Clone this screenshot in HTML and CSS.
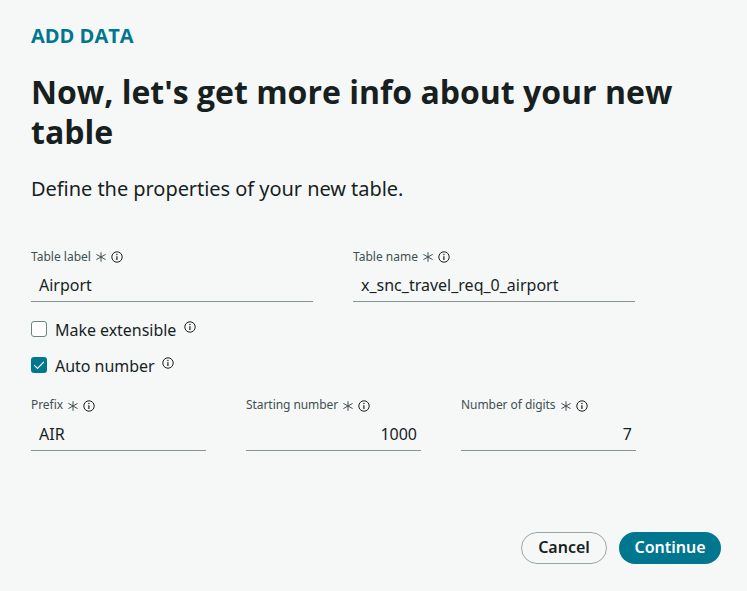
FILE: index.html
```html
<!DOCTYPE html>
<html lang="en">
<head>
<meta charset="utf-8">
<title>Add data</title>
<link rel="stylesheet" href="styles.css">
</head>
<body>
<svg class="defs" aria-hidden="true">
  <symbol id="req" viewBox="0 0 10 10"><path d="M5 .2V9.800M.4 2.400L9.600 7.600M9.600 2.400L.4 7.600" fill="none" stroke="currentColor"/></symbol>
  <symbol id="info" viewBox="0 0 12 12"><circle cx="6" cy="6" r="5.200" fill="none" stroke="currentColor"/><path d="M5.900 5.200V9" stroke="currentColor" stroke-width="1.200" fill="none"/><circle cx="5.900" cy="3.500" r=".7" fill="currentColor"/></symbol>
</svg>
<main class="page">
  <p class="eyebrow">ADD DATA</p>
  <h1>Now, let's get more info about your new table</h1>
  <p class="intro">Define the properties of your new table.</p>
  <form>
    <div class="row">
      <div class="field wide"><div class="label"><span>Table label</span><svg class="req"><use href="#req"/></svg><svg class="info"><use href="#info"/></svg></div><div class="value">Airport</div></div>
      <div class="field wide"><div class="label"><span>Table name</span><svg class="req"><use href="#req"/></svg><svg class="info"><use href="#info"/></svg></div><div class="value">x_snc_travel_req_0_airport</div></div>
    </div>
    <div class="check"><span class="box"></span><span>Make extensible</span><svg class="info"><use href="#info"/></svg></div>
    <div class="check"><span class="box on"><svg viewBox="0 0 16 16"><path d="M3.200 8.200L6.500 11.500L12.800 5" fill="none" stroke="currentColor" stroke-width="1.100"/></svg></span><span>Auto number</span><svg class="info"><use href="#info"/></svg></div>
    <div class="row second">
      <div class="field"><div class="label"><span>Prefix</span><svg class="req"><use href="#req"/></svg><svg class="info"><use href="#info"/></svg></div><div class="value">AIR</div></div>
      <div class="field"><div class="label"><span>Starting number</span><svg class="req"><use href="#req"/></svg><svg class="info"><use href="#info"/></svg></div><div class="value num">1000</div></div>
      <div class="field"><div class="label"><span>Number of digits</span><svg class="req"><use href="#req"/></svg><svg class="info"><use href="#info"/></svg></div><div class="value num">7</div></div>
    </div>
  </form>
  <footer><button class="btn">Cancel</button><button class="btn primary">Continue</button></footer>
</main>
</body>
</html>
```
FILE: styles.css
```css
* { box-sizing: border-box; }
body { margin: 0; background: #f6f8f8; color: #181f1f; font-family: "Noto Sans", sans-serif; font-size: 16px; }
.defs { position: absolute; width: 0; height: 0; }
.page { height: 591px; padding: 22px 26px 27px 31px; display: flex; flex-direction: column; }
p, h1 { margin: 0; }
.eyebrow { font-family: "Open Sans", sans-serif; font-size: 20px; line-height: 28px; font-weight: 700; color: #00778f; }
h1 { margin-top: 22px; font-family: "Open Sans", sans-serif; font-size: 32px; line-height: 40px; font-weight: 700; }
.intro { margin-top: 22px; font-size: 20px; line-height: 30px; letter-spacing: -.05px; }
form { margin-top: 44px; }
.row { display: flex; gap: 40px; }
.field { width: 175px; }
.wide { width: 282px; }
.label { display: flex; align-items: center; height: 18px; font-size: 12px; line-height: 18px; color: #3f5050; }
.label span { white-space: nowrap; }
.req { width: 10px; height: 10px; margin-left: 5px; color: #3f5050; }
.info { width: 12px; height: 12px; margin-left: 5px; color: #181f1f; }
.value { height: 36px; padding: 0 4px 0 8px; line-height: 38px; border-bottom: 1px solid #859391; white-space: nowrap; }
.num { text-align: right; }
.check { display: flex; align-items: center; height: 24px; margin-top: 16px; letter-spacing: -.04px; }
.check + .check { margin-top: 12px; }
.box { width: 16px; height: 16px; margin: -2px 8px 0 0; border: 1px solid #6f8280; border-radius: 3px; background: #fff; }
.box.on { border: 0; background: #00778f; color: #fff; }
.box svg { display: block; }
.check .info { margin: -7px 0 0 7.5px; }
.second { margin-top: 18px; }
.second .label { letter-spacing: -.06px; }
.second .req { margin-top: 1px; }
.second .info { margin-top: 1px; }
.second .value { margin-top: 1px; }
footer { display: flex; justify-content: flex-end; gap: 12px; margin-top: auto; }
.btn { width: 86px; height: 32px; padding: 0 0 2px; border: 1px solid #9aa8a6; border-radius: 16px; background: transparent; color: #181f1f; font: 600 16px/28px "Noto Sans", sans-serif; }
.primary { width: 102px; border: 0; background: #00778f; color: #fff; }
```
